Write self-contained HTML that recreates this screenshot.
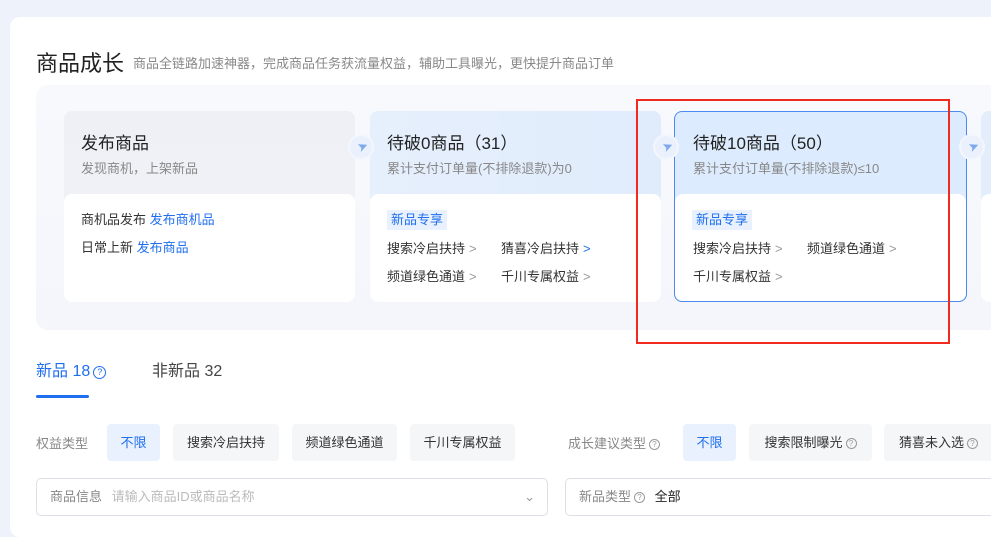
<!DOCTYPE html>
<html><head><meta charset="utf-8"><style>
*{margin:0;padding:0;box-sizing:border-box}
body{width:991px;height:518px;overflow:hidden;background:#eef2fa;font-family:"Liberation Sans","Noto Sans CJK SC",sans-serif;position:relative;color:#333}
.abs{position:absolute}
.panel{left:10px;top:17px;width:1000px;height:520px;background:#fff;border-radius:10px}
.inner{left:36px;top:85px;width:990px;height:245px;background:linear-gradient(180deg,#f7f9fd,#f4f6fb);border-radius:12px}
.card{position:absolute;top:111px;width:291px;height:191px;border-radius:8px;overflow:hidden}
.card .hd{height:84px;padding:21px 0 0 17px}
.card .hd h3{font-size:17px;font-weight:normal;color:#222;line-height:24px}
.card .hd p{font-size:13px;color:#888;margin-top:2px}
.card .bd{position:absolute;left:0;right:0;top:83px;bottom:0;background:#fff;border-radius:8px;padding:15px 17px;font-size:13px;color:#333}
.blue{color:#1f6ff0}
.tag{display:inline-block;background:#e8f1fd;color:#1f6ff0;padding:0 4px;line-height:20px;font-size:13px}
.arr{position:absolute;width:26px;height:26px;border-radius:50%;background:#eaf1fd;border:2px solid #f3f6fc;top:134px}
.arr:after{content:"";position:absolute;left:7px;top:7px;width:9px;height:9px;background:#7fa9ef;transform:rotate(20deg);clip-path:polygon(0 30%,100% 0,60% 100%,50% 55%)}
.row{position:absolute;font-size:13px;color:#333;white-space:nowrap}
.chev{color:#999;margin-left:4px}
.chip{position:absolute;top:424px;height:37px;line-height:37px;background:#f5f6f8;border-radius:4px;font-size:13px;color:#333;text-align:center}
.q{display:inline-block;width:11px;height:11px;border:1px solid #999;border-radius:50%;font-size:8px;line-height:9px;text-align:center;color:#999;vertical-align:1px;margin-left:3px}
.inp{position:absolute;top:478px;height:38px;border:1px solid #dcdfe6;border-radius:5px;font-size:13px;line-height:36px;padding-left:13px}
</style></head><body>
<div class="abs panel"></div>
<div class="abs" style="left:36px;top:46px;font-size:22px;color:#222">商品成长</div>
<div class="abs" style="left:133px;top:53px;font-size:13px;color:#888">商品全链路加速神器，完成商品任务获流量权益，辅助工具曝光，更快提升商品订单</div>
<div class="abs inner"></div>

<div class="card" style="left:64px;background:linear-gradient(180deg,#eef0f5,#f1f3f8)">
<div class="hd"><h3>发布商品</h3><p>发现商机，上架新品</p></div>
<div class="bd"><div>商机品发布 <span class="blue">发布商机品</span></div><div style="margin-top:9px">日常上新 <span class="blue">发布商品</span></div></div></div>

<div class="card" style="left:370px;background:linear-gradient(90deg,#e6effc,#e0ecfc)">
<div class="hd"><h3>待破0商品（31）</h3><p>累计支付订单量(不排除退款)为0</p></div>
<div class="bd" style="padding-top:16px"><span class="tag">新品专享</span>
<div class="row" style="left:17px;top:44px">搜索冷启扶持<span class="chev">&gt;</span></div>
<div class="row blue" style="left:131px;top:44px">猜喜冷启扶持<span class="chev" style="color:#1f6ff0">&gt;</span></div>
<div class="row" style="left:17px;top:72px">频道绿色通道<span class="chev">&gt;</span></div>
<div class="row" style="left:131px;top:72px">千川专属权益<span class="chev">&gt;</span></div></div></div>

<div class="card" style="left:674px;width:293px;background:#dcebfd;border:1px solid #4d8af0">
<div class="hd" style="padding-left:18px;padding-top:20px"><h3>待破10商品（50）</h3><p>累计支付订单量(不排除退款)≤10</p></div>
<div class="bd" style="top:82px;padding-top:16px"><span class="tag">新品专享</span>
<div class="row" style="left:18px;top:44px">搜索冷启扶持<span class="chev">&gt;</span></div>
<div class="row" style="left:132px;top:44px">频道绿色通道<span class="chev">&gt;</span></div>
<div class="row" style="left:18px;top:72px">千川专属权益<span class="chev">&gt;</span></div></div></div>

<div class="card" style="left:981px;background:#e3edfc"><div class="bd"></div></div>

<div class="arr" style="left:348px"></div>
<div class="arr" style="left:653px"></div>
<div class="arr" style="left:959px"></div>

<div class="abs" style="left:636px;top:99px;width:314px;height:245px;border:2px solid #f02a1e"></div>

<div class="abs" style="left:36px;top:357px;font-size:16px;color:#1f6ff0">新品 18<span class="q" style="border-color:#1f6ff0;color:#1f6ff0;width:13px;height:13px;line-height:11px;font-size:9px">?</span></div>
<div class="abs" style="left:36px;top:395px;width:53px;height:3px;background:#1f6ff0;border-radius:2px"></div>
<div class="abs" style="left:152px;top:357px;font-size:16px;color:#444">非新品 32</div>

<div class="abs" style="left:36px;top:433px;font-size:13px;color:#888">权益类型</div>
<div class="chip" style="left:107px;width:53px;background:#e8f1fd;color:#1f6ff0">不限</div>
<div class="chip" style="left:173px;width:106px">搜索冷启扶持</div>
<div class="chip" style="left:292px;width:105px">频道绿色通道</div>
<div class="chip" style="left:410px;width:105px">千川专属权益</div>
<div class="abs" style="left:568px;top:433px;font-size:13px;color:#888">成长建议类型<span class="q">?</span></div>
<div class="chip" style="left:683px;width:53px;background:#e8f1fd;color:#1f6ff0">不限</div>
<div class="chip" style="left:749px;width:123px">搜索限制曝光<span class="q">?</span></div>
<div class="chip" style="left:884px;width:120px;text-align:left;padding-left:15px">猜喜未入选<span class="q">?</span></div>

<div class="inp" style="left:36px;width:512px;color:#888">商品信息 <span style="color:#bbb;margin-left:6px">请输入商品ID或商品名称</span><span style="position:absolute;right:12px;top:0;color:#999">&#8964;</span></div>
<div class="inp" style="left:565px;width:440px;color:#888">新品类型<span class="q">?</span> <span style="color:#222;margin-left:6px">全部</span></div>
</body></html>
